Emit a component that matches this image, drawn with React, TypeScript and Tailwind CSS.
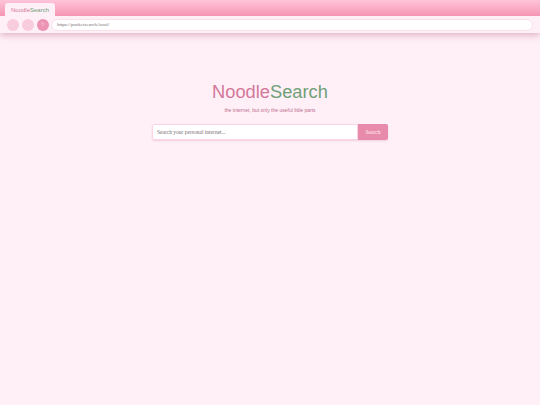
export default function App() {
  return (
    <div className="flex h-[405px] w-[540px] flex-col overflow-hidden bg-[#fff0f7] font-['Liberation_Sans',sans-serif]">
      <div className="relative z-10 shadow-[0_2px_7px_rgba(190,110,140,0.5)]">
        <div className="flex h-[16px] items-end bg-gradient-to-b from-[#ffc4d8] to-[#f495b4] pl-[5px]">
          <div className="flex h-[13px] w-[50px] items-center justify-center rounded-t-[3px] bg-[#fff0f7] text-[6px] leading-none">
            <span className="text-[#d4789a]">Noodle</span>
            <span className="text-[#6f9f78]">Search</span>
          </div>
        </div>
        <div className="flex h-[17px] items-center gap-[3px] bg-[#fff0f7] px-[7px]">
          <button className="flex h-[12px] w-[12px] items-center justify-center rounded-full bg-[#f8ccdc] text-[5px] text-[#fbe3ec]">←</button>
          <button className="flex h-[12px] w-[12px] items-center justify-center rounded-full bg-[#f8ccdc] text-[5px] text-[#fbe3ec]">→</button>
          <button className="flex h-[12px] w-[12px] items-center justify-center rounded-full bg-[#ec92b2] text-[5px] text-[#f8cfdd]">↻</button>
          <div className="ml-[-1px] flex h-[12px] flex-1 items-center rounded-full border border-[#fbe0ea] bg-white pl-[5px] font-['Liberation_Serif',serif] text-[5px] text-[#7a7076]">
            https://pocketsearch.local/
          </div>
        </div>
      </div>
      <main className="flex flex-1 flex-col items-center pt-[48px]">
        <h1 className="text-[18.3px] font-normal leading-[22px]">
          <span className="text-[#d4789a]">Noodle</span>
          <span className="text-[#6f9f78]">Search</span>
        </h1>
        <p className="mt-[4px] text-[5px] leading-[7px] text-[#c06c8e]">the internet, but only the useful little parts</p>
        <form className="mt-[10px] flex h-[15.5px] w-[236px] overflow-hidden rounded-[2px] shadow-[0_1px_2px_rgba(200,120,150,0.25)]">
          <div className="flex flex-1 items-center rounded-l-[2px] border border-[#fbd3e1] bg-white pl-[4px] font-['Liberation_Serif',serif] text-[5.5px] text-[#7a7076]">
            Search your personal internet...
          </div>
          <button type="button" className="w-[30px] bg-[#e88bab] font-['Liberation_Serif',serif] text-[5.5px] text-[#fff0f7]">
            Search
          </button>
        </form>
      </main>
    </div>
  );
}
